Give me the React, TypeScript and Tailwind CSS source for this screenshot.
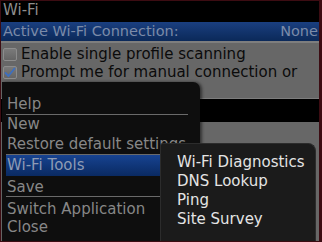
const font = { fontFamily: '"DejaVu Sans", Verdana, sans-serif' };

const Checkbox = ({ checked }: { checked?: boolean }) => (
  <div className="w-[14px] h-[13px] rounded-[2px] border border-[#8c8c8c] bg-gradient-to-b from-[#7a7a7a] to-[#656565] flex items-center justify-center">
    {checked && (
      <svg width="12" height="11" viewBox="0 0 12 11">
        <path d="M1.5 6 L4.5 9 L10.5 1.5" fill="none" stroke="#3d6fbf" strokeWidth="1.8" strokeLinecap="round" strokeLinejoin="round" />
      </svg>
    )}
  </div>
);

const Sep = () => <div className="ml-[4px] w-[182px] h-px bg-[#6a6a6a]" />;

export default function App() {
  return (
    <div className="w-[322px] h-[242px] border-t border-l border-b border-r-[3px] border-[#3c0c12] bg-black text-[15px]" style={font}>
      <div className="relative w-full h-full overflow-hidden flex flex-col bg-[#676767]">
        {/* title */}
        <div className="h-[21px] bg-black text-[#8e8e8e] pl-[2px] leading-[18px]">Wi-Fi</div>

        {/* active connection band */}
        <div className="h-[19px] bg-gradient-to-b from-[#1a3f80] to-[#0b2959] text-[#7b8ba8] text-[14.5px] leading-[19px] flex justify-between pl-[2px] pr-[1px]">
          <span>Active Wi-Fi Connection:</span>
          <span>None</span>
        </div>
        <div className="h-[2px] bg-[#7e7e7e]" />

        {/* options */}
        <div className="mt-[2px] flex items-center h-[18px] pl-[2px] leading-[18px] text-[#0b0b0b]">
          <Checkbox />
          <span className="ml-[4px] whitespace-nowrap">Enable single profile scanning</span>
        </div>
        <div className="flex items-center h-[18px] pl-[2px] leading-[18px] text-[#0b0b0b]">
          <Checkbox checked />
          <span className="ml-[4px] whitespace-nowrap">Prompt me for manual connection or</span>
        </div>
        <div className="h-[17px]" />
        <div className="h-px bg-[#7d7d7d]" />
        <div className="h-[23px] bg-black" />

        {/* main menu */}
        <div className="absolute left-[1px] top-[81px] w-[198px] bottom-0 bg-[#0e0e0e] rounded-tr-[7px] shadow-[2px_0_3px_rgba(0,0,0,0.5)] text-[#878787] pt-[12px]">
          <div className="pl-[5px] h-[20px] leading-[20px]">Help</div>
          <Sep />
          <div className="pl-[5px] h-[19px] leading-[19px]">New</div>
          <div className="pl-[5px] h-[20px] leading-[20px] whitespace-nowrap">Restore default settings</div>
          <Sep />
          <div className="ml-[4px] mr-[2px] pl-[1px] h-[21px] leading-[20px] bg-gradient-to-b from-[#174391] to-[#0a2a62] text-[#8d9bb5]">Wi-Fi Tools</div>
          <div className="pl-[5px] h-[20px] leading-[22px]">Save</div>
          <Sep />
          <div className="pl-[5px] h-[20px] leading-[24px]">Switch Application</div>
          <div className="pl-[5px] h-[20px] leading-[20px]">Close</div>
        </div>

        {/* submenu */}
        <div className="absolute left-[159px] top-[142px] w-[156px] bottom-0 bg-[#1b1b1b] border border-b-0 border-[#2c2c2c] rounded-tl-[3px] rounded-tr-[8px] pl-[16px] pt-[9px] text-[#e4e4e4] leading-[19px]">
          <div>Wi-Fi Diagnostics</div>
          <div>DNS Lookup</div>
          <div>Ping</div>
          <div>Site Survey</div>
        </div>
      </div>
    </div>
  );
}
